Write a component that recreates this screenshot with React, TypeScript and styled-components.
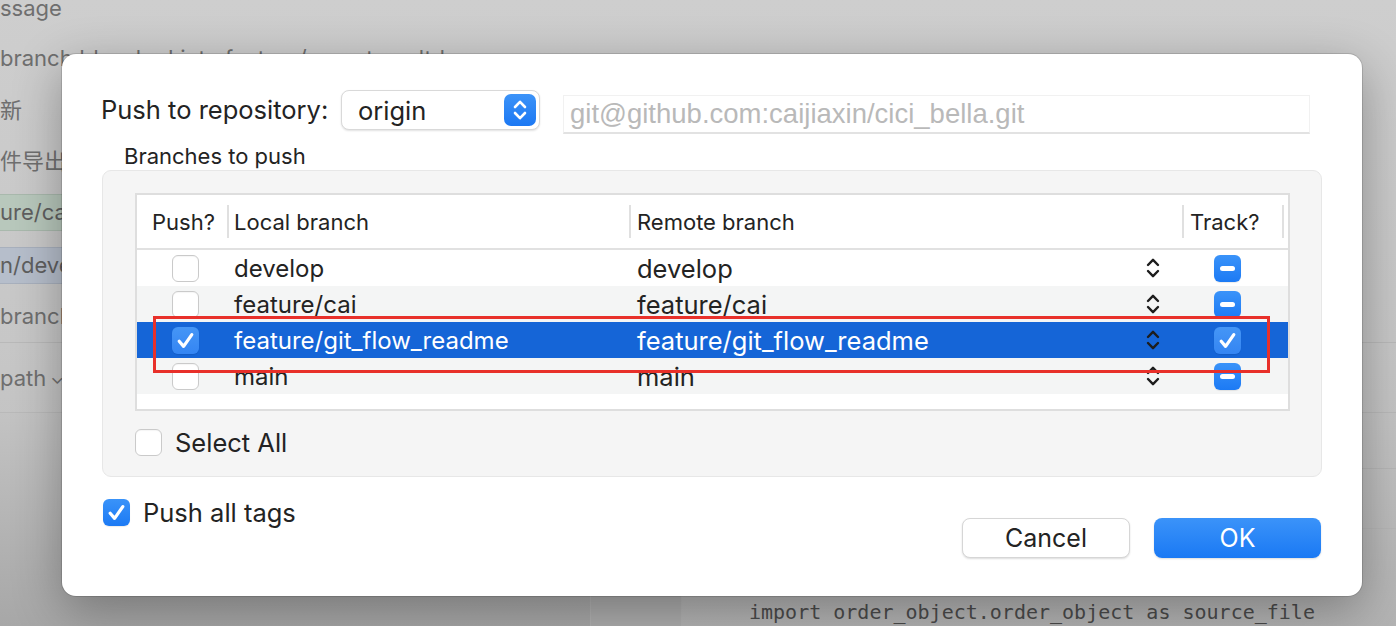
import React from "react";
import styled, { createGlobalStyle } from "styled-components";

const GlobalStyle = createGlobalStyle`
  html, body { margin: 0; padding: 0; }
  body {
    font-family: Inter, "Liberation Sans", "Noto Sans CJK SC", sans-serif;
    background: #c8c8c8;
  }
  * { box-sizing: border-box; }
`;

const Screen = styled.div`
  position: relative;
  width: 1396px;
  height: 626px;
  overflow: hidden;
  background: linear-gradient(180deg, #cecece 0%, #c7c7c7 55%, #bcbcbc 100%);
`;

/* ---------- backdrop (app behind the sheet) ---------- */
const Backdrop = styled.div`
  display: flex;
  flex-direction: column;
  width: 100%;
  height: 100%;
`;

const BgRow = styled.div<{ $h: number; $line?: boolean }>`
  flex-shrink: 0;
  height: ${(p) => p.$h}px;
  display: flex;
  align-items: center;
  border-bottom: ${(p) => (p.$line ? "1px solid #b9b9b9" : "none")};
  font-family: Inter, "Noto Sans CJK SC", sans-serif;
  font-size: 22px;
  color: #6f6f6f;
  white-space: nowrap;
`;

const TopBgRow = styled(BgRow)`
  align-items: flex-start;
  padding-top: 1px;
  line-height: 14px;
`;

const BgTag = styled.span<{ $tone: "green" | "blue" }>`
  display: flex;
  align-items: center;
  height: 37px;
  width: 220px;
  background: ${(p) => (p.$tone === "green" ? "#b8c8bc" : "#b6becb")};
  border-top: 1px solid ${(p) => (p.$tone === "green" ? "#a9b9ad" : "#a8b0bd")};
  border-bottom: 1px solid ${(p) => (p.$tone === "green" ? "#a9b9ad" : "#a8b0bd")};
  color: #5f5f5f;
`;

const Chevron = styled.span`
  font-size: 18px;
  margin-left: 4px;
`;

const LowerArea = styled.div`
  flex: 1;
  display: flex;
`;

const LeftPane = styled.div`
  width: 591px;
  border-right: 1px solid #b3b3b3;
  background: linear-gradient(180deg, #c3c3c3, #a7a7a7);
`;

const MidPane = styled.div`
  width: 91px;
  border-right: 1px solid #b3b3b3;
  background: #adadad;
`;

const RightPane = styled.div`
  flex: 1;
  display: flex;
  flex-direction: column;
  background: linear-gradient(180deg, #c4c4c4, #b3b3b3);
`;

const RightRow = styled.div<{ $h: number }>`
  height: ${(p) => p.$h}px;
  flex-shrink: 0;
  border-bottom: 1px solid #b6b6b6;
`;

const CodeLine = styled.div`
  flex: 1;
  display: flex;
  align-items: flex-end;
  padding: 0 0 1px 67px;
  font-family: "DejaVu Sans Mono", "Liberation Mono", monospace;
  font-size: 20px;
  line-height: 26px;
  color: #4b4b4b;
  white-space: nowrap;
`;

/* ---------- sheet ---------- */
const Sheet = styled.div`
  position: absolute;
  left: 62px;
  top: 54px;
  width: 1300px;
  height: 542px;
  background: #ffffff;
  border-radius: 14px;
  box-shadow: 0 0 0 1px rgba(0, 0, 0, 0.13), 0 14px 50px rgba(0, 0, 0, 0.32);
  padding: 36px 40px 0 39px;
  display: flex;
  flex-direction: column;
  color: #232323;
`;

const RepoRow = styled.div`
  display: flex;
  align-items: flex-start;
  height: 44px;
`;

const RepoLabel = styled.div`
  width: 240px;
  font-size: 25.5px;
  line-height: 40px;
  color: #232323;
  white-space: nowrap;
`;

const PopUp = styled.div`
  width: 199px;
  height: 40px;
  border-radius: 8px;
  background: #fff;
  border: 1px solid #d9d9d9;
  box-shadow: 0 1px 2px rgba(0, 0, 0, 0.12);
  display: flex;
  align-items: center;
  justify-content: space-between;
  padding: 0 3px 0 16px;
  font-size: 25.5px;
  color: #232323;
`;

const PopUpStepper = styled.div`
  width: 32px;
  height: 32px;
  border-radius: 7px;
  background: linear-gradient(180deg, #3c93f8 0%, #1c78f3 100%);
  display: flex;
  align-items: center;
  justify-content: center;
`;

const UrlField = styled.div`
  margin: 5px 0 0 23px;
  width: 747px;
  height: 39px;
  border: 1px solid #f1f1f1;
  border-bottom: 2px solid #e2e2e2;
  background: #fff;
  display: flex;
  align-items: center;
  padding-left: 6px;
  font-family: "Liberation Sans", Arial, sans-serif;
  font-size: 27.5px;
  color: #b9b9b9;
  white-space: nowrap;
`;

const GroupLabel = styled.div`
  margin: 10px 0 2px 23px;
  font-size: 22px;
  line-height: 24px;
  color: #232323;
`;

const GroupBox = styled.div`
  margin-left: 1px;
  height: 307px;
  border-radius: 9px;
  background: #f5f5f5;
  border: 1px solid #e7e7e7;
  padding: 22px 31px 0 32px;
  display: flex;
  flex-direction: column;
`;

const Table = styled.div`
  height: 218px;
  border: 2px solid #dedede;
  background: #fff;
  display: flex;
  flex-direction: column;
`;

const Cols = "90px 402px 553px 102px";

const HeaderRow = styled.div`
  display: grid;
  grid-template-columns: ${Cols};
  height: 55px;
  border-bottom: 2px solid #e1e1e1;
  align-items: center;
  font-size: 22px;
  color: #232323;
`;

const HeaderCell = styled.div<{ $pad: number }>`
  display: flex;
  align-items: center;
  height: 100%;
  white-space: nowrap;
  gap: ${(p) => p.$pad}px;
`;

const FirstHeaderCell = styled(HeaderCell)`
  padding-left: 15px;
`;

const HeaderSep = styled.span`
  width: 2px;
  height: 33px;
  background: #e0e0e0;
  flex-shrink: 0;
`;

const Spacer = styled.span`
  flex: 1;
`;

const BodyRow = styled.div<{ $tone: "white" | "alt" | "sel" }>`
  display: grid;
  grid-template-columns: ${Cols};
  height: 36px;
  align-items: center;
  background: ${(p) =>
    p.$tone === "sel" ? "#1565d7" : p.$tone === "alt" ? "#f4f5f5" : "#ffffff"};
  color: ${(p) => (p.$tone === "sel" ? "#ffffff" : "#232323")};
  font-size: 24px;
  white-space: nowrap;
`;

const PushCell = styled.div`
  display: flex;
  align-items: center;
  padding-left: 35px;
`;

const TextCell = styled.div<{ $pad: number }>`
  display: flex;
  align-items: center;
  padding-left: ${(p) => p.$pad}px;
`;

const RemoteCell = styled.div`
  display: flex;
  align-items: center;
  justify-content: space-between;
  padding: 0 22px 0 8px;
  font-size: 25.5px;
`;

const TrackCell = styled.div`
  display: flex;
  align-items: center;
  padding-left: 32px;
`;

const Box = styled.span<{ $kind: "off" | "on" | "mixed"; $onSel?: boolean }>`
  width: 27px;
  height: 27px;
  flex-shrink: 0;
  border-radius: 6px;
  display: flex;
  align-items: center;
  justify-content: center;
  background: ${(p) =>
    p.$kind === "off"
      ? "#ffffff"
      : p.$onSel
      ? "linear-gradient(180deg, #4596f6 0%, #3485f3 100%)"
      : "linear-gradient(180deg, #3a93f9 0%, #1c7af4 100%)"};
  border: ${(p) => (p.$kind === "off" ? "1px solid #cacaca" : "none")};
  box-shadow: ${(p) =>
    p.$kind === "off" ? "inset 0 1px 1px rgba(0,0,0,0.04)" : "0 1px 1px rgba(0,0,0,0.08)"};
`;

const MinusBar = styled.span`
  width: 15px;
  height: 5px;
  border-radius: 3px;
  background: #ffffff;
`;

const SelectAllRow = styled.label`
  display: flex;
  align-items: center;
  gap: 13px;
  margin-top: 16px;
  font-size: 25.5px;
  color: #232323;
`;

const Footer = styled.div`
  display: flex;
  align-items: flex-start;
  justify-content: space-between;
  padding: 0 1px 0 2px;
`;

const TagsOption = styled.label`
  display: flex;
  align-items: center;
  gap: 13px;
  margin-top: 20px;
  font-size: 25.5px;
  color: #232323;
`;

const Buttons = styled.div`
  display: flex;
  gap: 24px;
  margin-top: 41px;
`;

const Button = styled.button<{ $primary?: boolean }>`
  width: ${(p) => (p.$primary ? 167 : 168)}px;
  height: 40px;
  border-radius: 8px;
  font-family: Inter, "Liberation Sans", sans-serif;
  font-size: 25px;
  cursor: default;
  color: ${(p) => (p.$primary ? "#ffffff" : "#232323")};
  background: ${(p) =>
    p.$primary ? "linear-gradient(180deg, #3b93f9 0%, #1a79f4 100%)" : "#ffffff"};
  border: ${(p) => (p.$primary ? "none" : "1px solid #d6d6d6")};
  box-shadow: 0 1px 2px rgba(0, 0, 0, 0.14);
`;

const Annotation = styled.div`
  position: absolute;
  left: 153px;
  top: 316px;
  width: 1117px;
  height: 57px;
  border: 3px solid #e8302a;
  pointer-events: none;
`;

/* ---------- icons ---------- */
const Check = ({ size = 27 }: { size?: number }) => (
  <svg width={size} height={size} viewBox="0 0 27 27">
    <path
      d="M7.2 14.2 L11.6 19.4 L19.8 7.6"
      fill="none"
      stroke="#ffffff"
      strokeWidth={3.2}
      strokeLinecap="round"
      strokeLinejoin="round"
    />
  </svg>
);

const UpDown = ({ color, w, h, sw }: { color: string; w: number; h: number; sw: number }) => (
  <svg width={w} height={h} viewBox="0 0 14 22">
    <path
      d="M2 8 L7 2.8 L12 8 M2 14 L7 19.2 L12 14"
      fill="none"
      stroke={color}
      strokeWidth={sw}
      strokeLinecap="round"
      strokeLinejoin="round"
    />
  </svg>
);

type Branch = {
  local: string;
  remote: string;
  push: boolean;
  track: "mixed" | "on";
  tone: "white" | "alt" | "sel";
};

const branches: Branch[] = [
  { local: "develop", remote: "develop", push: false, track: "mixed", tone: "white" },
  { local: "feature/cai", remote: "feature/cai", push: false, track: "mixed", tone: "alt" },
  {
    local: "feature/git_flow_readme",
    remote: "feature/git_flow_readme",
    push: true,
    track: "on",
    tone: "sel",
  },
  { local: "main", remote: "main", push: false, track: "mixed", tone: "alt" },
];

export default function App() {
  return (
    <>
      <GlobalStyle />
      <Screen>
        <Backdrop>
          <TopBgRow $h={32}>ssage</TopBgRow>
          <BgRow $h={51}>branch 'develop' into feature/exportresultdoc</BgRow>
          <BgRow $h={50}>新</BgRow>
          <BgRow $h={51}>件导出功能</BgRow>
          <BgRow $h={56}>
            <BgTag $tone="green">ure/cai</BgTag>
          </BgRow>
          <BgRow $h={50}>
            <BgTag $tone="blue">n/develop</BgTag>
          </BgRow>
          <BgRow $h={53} $line>branch</BgRow>
          <BgRow $h={70} $line>
            path<Chevron>⌄</Chevron>
          </BgRow>
          <LowerArea>
            <LeftPane />
            <MidPane />
            <RightPane>
              <RightRow $h={56} />
              <RightRow $h={60} />
              <CodeLine>import order_object.order_object as source_file</CodeLine>
            </RightPane>
          </LowerArea>
        </Backdrop>

        <Sheet>
          <RepoRow>
            <RepoLabel>Push to repository:</RepoLabel>
            <PopUp>
              <span>origin</span>
              <PopUpStepper>
                <UpDown color="#ffffff" w={14} h={24} sw={2.6} />
              </PopUpStepper>
            </PopUp>
            <UrlField>git@github.com:caijiaxin/cici_bella.git</UrlField>
          </RepoRow>

          <GroupLabel>Branches to push</GroupLabel>
          <GroupBox>
            <Table>
              <HeaderRow>
                <FirstHeaderCell $pad={0}>Push?</FirstHeaderCell>
                <HeaderCell $pad={5}>
                  <HeaderSep />
                  Local branch
                </HeaderCell>
                <HeaderCell $pad={6}>
                  <HeaderSep />
                  Remote branch
                </HeaderCell>
                <HeaderCell $pad={6}>
                  <HeaderSep />
                  Track?
                  <Spacer />
                  <HeaderSep />
                </HeaderCell>
              </HeaderRow>
              {branches.map((b) => {
                const sel = b.tone === "sel";
                return (
                  <BodyRow key={b.local} $tone={b.tone}>
                    <PushCell>
                      <Box $kind={b.push ? "on" : "off"} $onSel={sel}>
                        {b.push && <Check />}
                      </Box>
                    </PushCell>
                    <TextCell $pad={7}>{b.local}</TextCell>
                    <RemoteCell>
                      <span>{b.remote}</span>
                      <UpDown color="#1d1d1d" w={14} h={22} sw={2.4} />
                    </RemoteCell>
                    <TrackCell>
                      <Box $kind={b.track === "on" ? "on" : "mixed"} $onSel={sel}>
                        {b.track === "on" ? <Check /> : <MinusBar />}
                      </Box>
                    </TrackCell>
                  </BodyRow>
                );
              })}
            </Table>
            <SelectAllRow>
              <Box $kind="off" />
              Select All
            </SelectAllRow>
          </GroupBox>

          <Footer>
            <TagsOption>
              <Box $kind="on">
                <Check />
              </Box>
              Push all tags
            </TagsOption>
            <Buttons>
              <Button>Cancel</Button>
              <Button $primary>OK</Button>
            </Buttons>
          </Footer>
        </Sheet>

        <Annotation />
      </Screen>
    </>
  );
}
